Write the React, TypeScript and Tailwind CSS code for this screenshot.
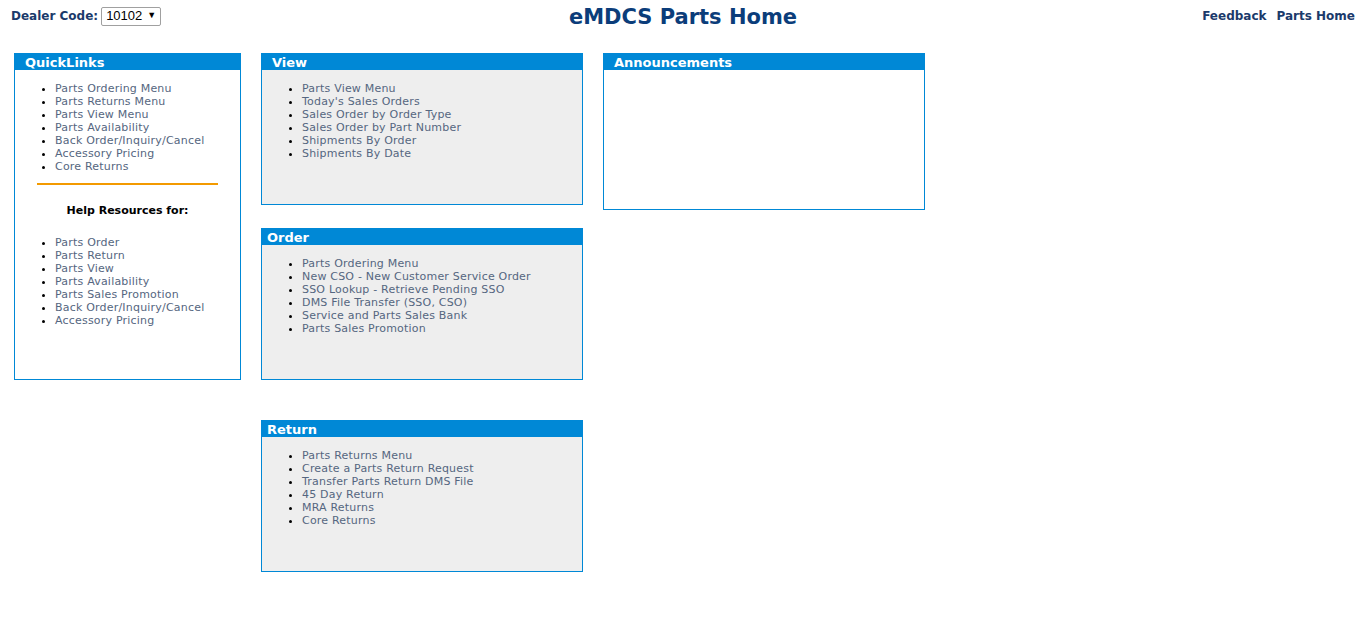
import React from "react";

const font = { fontFamily: '"DejaVu Sans", Verdana, sans-serif' };

const quickLinks = [
  "Parts Ordering Menu",
  "Parts Returns Menu",
  "Parts View Menu",
  "Parts Availability",
  "Back Order/Inquiry/Cancel",
  "Accessory Pricing",
  "Core Returns",
];

const helpLinks = [
  "Parts Order",
  "Parts Return",
  "Parts View",
  "Parts Availability",
  "Parts Sales Promotion",
  "Back Order/Inquiry/Cancel",
  "Accessory Pricing",
];

const viewLinks = [
  "Parts View Menu",
  "Today's Sales Orders",
  "Sales Order by Order Type",
  "Sales Order by Part Number",
  "Shipments By Order",
  "Shipments By Date",
];

const orderLinks = [
  "Parts Ordering Menu",
  "New CSO - New Customer Service Order",
  "SSO Lookup - Retrieve Pending SSO",
  "DMS File Transfer (SSO, CSO)",
  "Service and Parts Sales Bank",
  "Parts Sales Promotion",
];

const returnLinks = [
  "Parts Returns Menu",
  "Create a Parts Return Request",
  "Transfer Parts Return DMS File",
  "45 Day Return",
  "MRA Returns",
  "Core Returns",
];

function LinkList({ items }: { items: string[] }) {
  return (
    <ul className="list-disc pl-[40px] text-[11px] leading-[13px] text-black">
      {items.map((t) => (
        <li key={t}>
          <a href="#" className="text-[#556680] tracking-[0.2px]">
            {t}
          </a>
        </li>
      ))}
    </ul>
  );
}

function Panel({
  title,
  className,
  titleClass,
  children,
}: {
  title: string;
  className?: string;
  titleClass?: string;
  children?: React.ReactNode;
}) {
  return (
    <div className={"border border-[#0088d6] flex flex-col " + (className ?? "")}>
      <div
        className={
          "bg-[#0088d6] h-[16px] pt-[1px] text-white font-bold text-[13px] leading-[16px] " +
          (titleClass ?? "pl-[5px]")
        }
      >
        {title}
      </div>
      <div className="flex-1 pt-[12px]">{children}</div>
    </div>
  );
}

export default function App() {
  return (
    <div className="min-h-[623px] bg-white" style={font}>
      {/* Header */}
      <div className="relative flex items-center justify-between h-[32px] pl-[11px] pr-[11px]">
        <div className="flex items-center gap-[3px] text-[12px] font-bold text-[#1b3a6b]">
          <span>Dealer Code:</span>
          <div
            className="flex items-center gap-[5px] h-[19px] border border-[#a0a0a0] rounded-[2px] px-[4px] text-[13px] font-normal text-black"
            style={{ fontFamily: '"Liberation Sans", Arial, sans-serif' }}
          >
            <span>10102</span>
            <span className="text-[9px]">▼</span>
          </div>
        </div>
        <h1 className="absolute left-0 right-0 translate-y-[2px] text-center text-[21px] font-bold text-[#0b3d7a] pointer-events-none">
          eMDCS Parts Home
        </h1>
        <div className="flex gap-[10px] text-[12px] font-bold text-[#1b3a6b]">
          <a href="#">Feedback</a>
          <a href="#">Parts Home</a>
        </div>
      </div>

      {/* Panels */}
      <div className="flex items-start gap-[20px] pl-[14px] pt-[21px]">
        <Panel title="QuickLinks" className="w-[227px] h-[327px] bg-white" titleClass="pl-[10px]">
          <LinkList items={quickLinks} />
          <div className="mx-[22px] mt-[10px] h-[2px] bg-[#f39a00]" />
          <div className="text-center text-[11px] font-bold text-black mt-[18px]">
            Help Resources for:
          </div>
          <div className="mt-[16px]">
            <LinkList items={helpLinks} />
          </div>
        </Panel>

        <div className="flex flex-col">
          <Panel title="View" className="w-[322px] h-[152px] bg-[#eeeeee]" titleClass="pl-[10px]">
            <LinkList items={viewLinks} />
          </Panel>
          <Panel title="Order" className="w-[322px] h-[152px] bg-[#eeeeee] mt-[23px]">
            <LinkList items={orderLinks} />
          </Panel>
          <Panel title="Return" className="w-[322px] h-[152px] bg-[#eeeeee] mt-[40px]">
            <LinkList items={returnLinks} />
          </Panel>
        </div>

        <Panel title="Announcements" className="w-[322px] h-[157px] bg-white" titleClass="pl-[10px]" />
      </div>
    </div>
  );
}
